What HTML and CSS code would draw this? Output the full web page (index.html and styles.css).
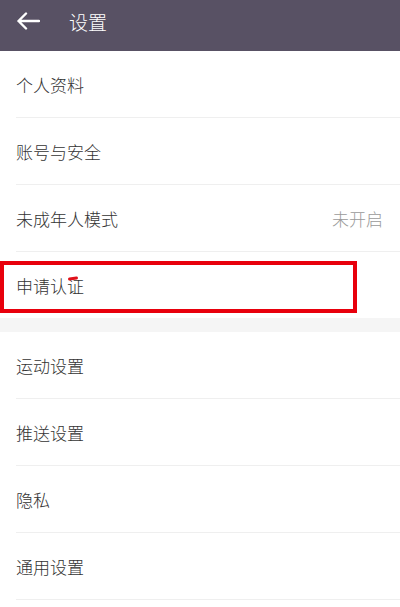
FILE: index.html
```html
<!DOCTYPE html>
<html lang="zh">
<head>
<meta charset="utf-8">
<link rel="stylesheet" href="styles.css">
</head>
<body>
<header class="topbar">
  <svg class="back" width="24" height="18" viewBox="0 0 24 18">
    <path d="M23 9H2.5M10 1.5L2.5 9l7.5 7.5" fill="none" stroke="#fff" stroke-width="2.4" stroke-linecap="round" stroke-linejoin="round"/>
  </svg>
  <span class="title">设置</span>
</header>
<section class="group">
  <div class="item"><div class="inner"><span>个人资料</span></div></div>
  <div class="item"><div class="inner"><span>账号与安全</span></div></div>
  <div class="item"><div class="inner"><span>未成年人模式</span><span class="value">未开启</span></div></div>
  <div class="item"><div class="inner last"><span>申请认证</span></div>
    <div class="highlight"></div>
    <div class="mark"></div>
  </div>
</section>
<div class="gap"></div>
<section class="group">
  <div class="item"><div class="inner"><span>运动设置</span></div></div>
  <div class="item"><div class="inner"><span>推送设置</span></div></div>
  <div class="item"><div class="inner"><span>隐私</span></div></div>
  <div class="item"><div class="inner"><span>通用设置</span></div></div>
</section>
</body>
</html>
```
FILE: styles.css
```css
html, body {
  margin: 0;
  padding: 0;
  background: #fff;
  font-family: "Noto Sans CJK SC", "Noto Sans", sans-serif;
}
body {
  width: 400px;
  height: 607px;
  overflow: hidden;
}
.topbar {
  height: 51px;
  background: #585164;
  display: flex;
  align-items: center;
  padding-left: 16px;
  box-sizing: border-box;
}
.back {
  display: block;
  margin-top: -9px;
}
.title {
  color: #fff;
  font-size: 19px;
  font-weight: 300;
  margin-left: 29px;
  margin-top: -9px;
}
.item {
  position: relative;
  padding-left: 16px;
}
.inner {
  height: 66px;
  border-bottom: 1px solid #efefef;
  display: flex;
  align-items: center;
  justify-content: space-between;
  padding-right: 17px;
  font-size: 17px;
  font-weight: 300;
  color: #333;
}
.inner.last {
  border-bottom: none;
}
.value {
  color: #9a9a9a;
}
.gap {
  height: 14px;
  background: #f5f5f5;
}
.highlight {
  position: absolute;
  left: 0;
  top: 9px;
  width: 357px;
  height: 52px;
  border: 4px solid #e8000c;
  box-sizing: border-box;
}
.mark {
  position: absolute;
  left: 68px;
  top: 25px;
  width: 10px;
  height: 3px;
  background: #e0101a;
  border-radius: 2px;
  transform: rotate(-8deg);
}
```
